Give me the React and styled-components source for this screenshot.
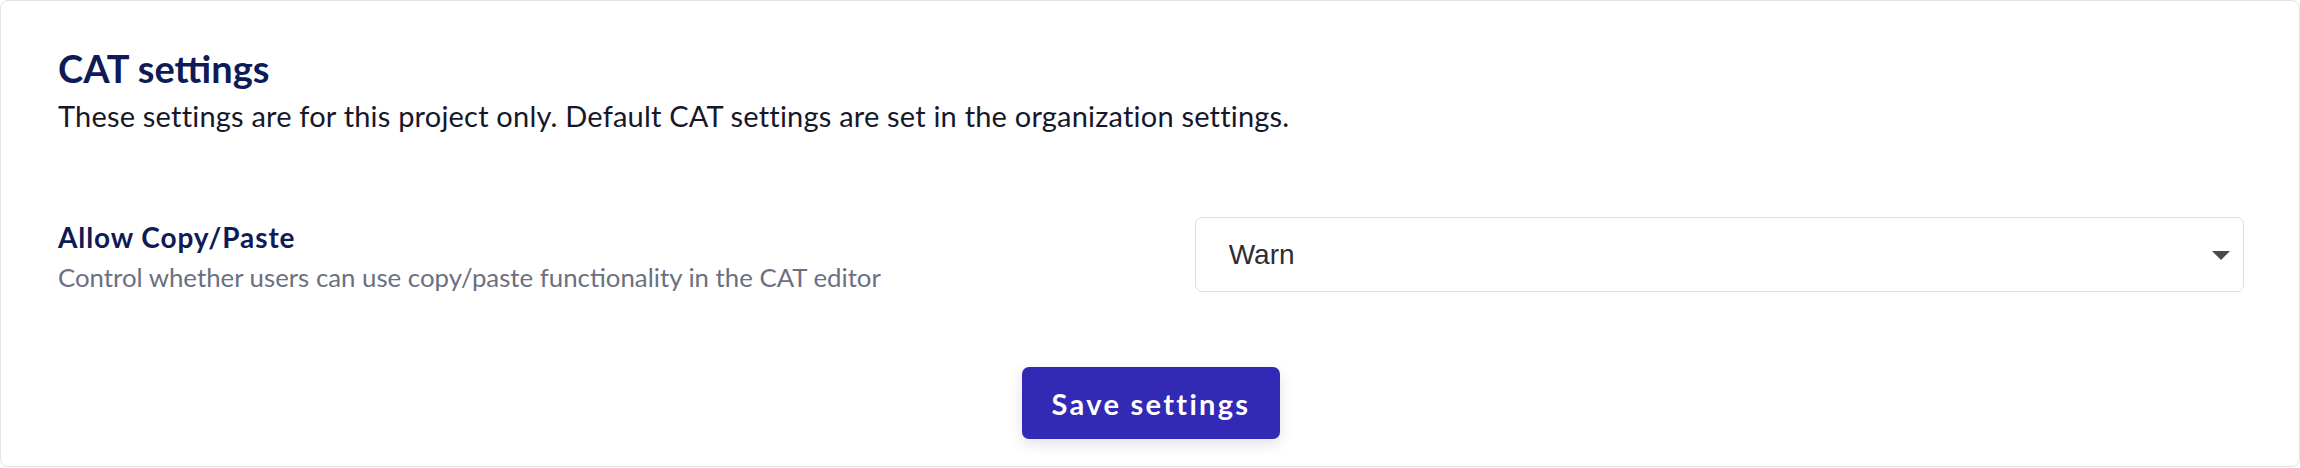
import React from "react";
import styled, { createGlobalStyle } from "styled-components";

const GlobalStyle = createGlobalStyle`
  html, body { margin: 0; padding: 0; background: #ffffff; }
  body { font-family: Lato, "Noto Sans", sans-serif; }
  * { box-sizing: border-box; }
`;

const Card = styled.section`
  width: 2300px;
  height: 467px;
  border: 1px solid #e3e4e8;
  border-radius: 8px;
  background: #ffffff;
  padding: 45px 55px 0 57px;
  display: flex;
  flex-direction: column;
`;

const Header = styled.header`
  display: flex;
  flex-direction: column;
  gap: 9px;
  margin-bottom: 84px;
`;

const Title = styled.h2`
  margin: 0;
  font-family: Lato, sans-serif;
  font-weight: 700;
  font-size: 38px;
  line-height: 44px;
  color: #0f1b57;
`;

const Subtitle = styled.p`
  margin: 0;
  font-family: Lato, sans-serif;
  font-size: 29px;
  line-height: 34px;
  letter-spacing: 0.2px;
  color: #16182a;
`;

const Row = styled.div`
  display: flex;
  justify-content: space-between;
  align-items: flex-start;
  height: 75px;
`;

const LabelBlock = styled.div`
  display: flex;
  flex-direction: column;
  gap: 4px;
  padding-top: 2px;
`;

const Label = styled.div`
  font-family: Lato, sans-serif;
  font-weight: 700;
  font-size: 28px;
  line-height: 36px;
  letter-spacing: 0.9px;
  color: #0f1b57;
`;

const Description = styled.div`
  font-family: Lato, sans-serif;
  font-size: 25.8px;
  line-height: 36px;
  color: #6b7080;
`;

const SelectWrap = styled.div`
  position: relative;
  width: 48%;
  height: 75px;
`;

const Select = styled.select`
  appearance: none;
  -webkit-appearance: none;
  width: 100%;
  height: 100%;
  border: 1px solid #dfdfe2;
  border-radius: 7px;
  background: #ffffff;
  padding: 0 60px 0 33px;
  font-family: "Liberation Sans", Arial, sans-serif;
  font-size: 28px;
  color: #2d2d33;
  outline: none;
`;

const Caret = styled.svg`
  position: absolute;
  right: 14px;
  top: 34px;
  width: 18px;
  height: 9px;
  pointer-events: none;
`;

const Footer = styled.div`
  display: flex;
  justify-content: center;
  margin-top: 75px;
`;

const Button = styled.button`
  height: 72px;
  padding: 0 30px;
  border: none;
  border-radius: 7px;
  background: #3229b5;
  color: #ffffff;
  font-family: Lato, sans-serif;
  font-weight: 700;
  font-size: 29px;
  letter-spacing: 2.3px;
  box-shadow: 0 5px 14px rgba(40, 40, 110, 0.14);
  cursor: pointer;
`;

export default function App() {
  return (
    <>
      <GlobalStyle />
      <Card>
        <Header>
          <Title>CAT settings</Title>
          <Subtitle>
            These settings are for this project only. Default CAT settings are set in the organization settings.
          </Subtitle>
        </Header>
        <Row>
          <LabelBlock>
            <Label>Allow Copy/Paste</Label>
            <Description>Control whether users can use copy/paste functionality in the CAT editor</Description>
          </LabelBlock>
          <SelectWrap>
            <Select defaultValue="warn">
              <option value="allow">Allow</option>
              <option value="warn">Warn</option>
              <option value="block">Block</option>
            </Select>
            <Caret viewBox="0 0 18 9">
              <path d="M0 0 H18 L9 9 Z" fill="#4a4a52" />
            </Caret>
          </SelectWrap>
        </Row>
        <Footer>
          <Button type="button">Save settings</Button>
        </Footer>
      </Card>
    </>
  );
}
